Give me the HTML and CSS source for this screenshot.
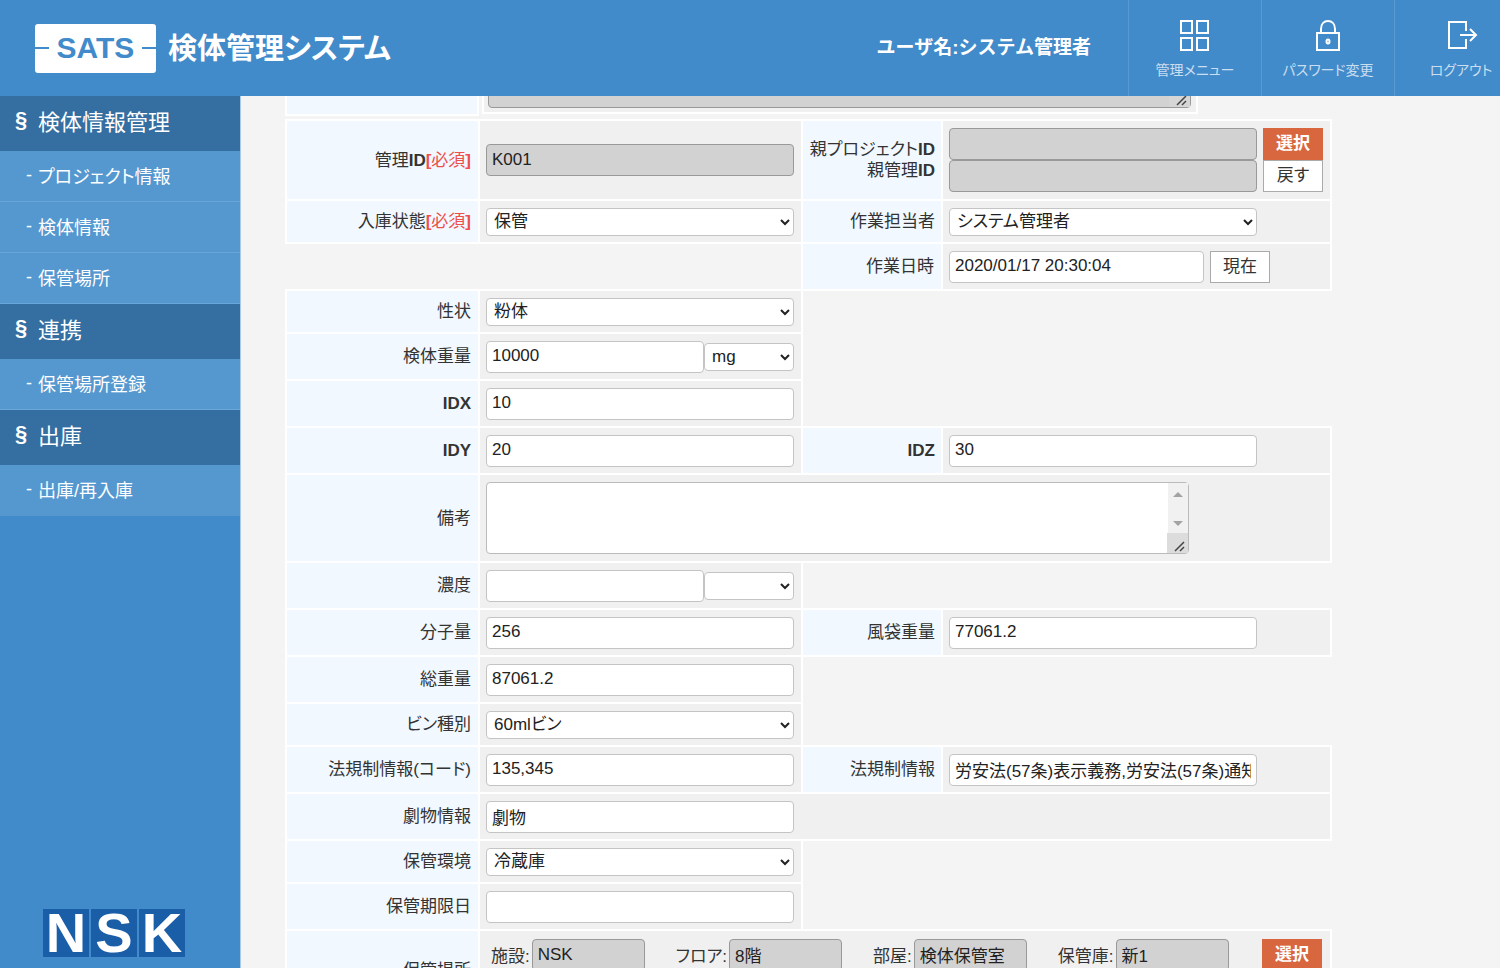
FILE: index.html
```html
<!DOCTYPE html>
<html lang="ja">
<head>
<meta charset="utf-8">
<title>検体管理システム</title>
<link rel="stylesheet" href="styles.css">
</head>
<body>
<header class="topbar">
  <div class="brand">
    <span class="brand-badge">SATS</span>
    <h1 class="brand-title">検体管理システム</h1>
  </div>
  <p class="user-name">ユーザ名:システム管理者</p>
  <nav class="top-nav">
    <a class="top-link" href="#">
      <svg class="top-icon" viewBox="0 0 36 36" fill="none" stroke="#fff" stroke-width="2"><path d="M4 4h11v12H4zM20 4h11v12H20zM4 21h11v12H4zM20 21h11v12H20z"/></svg>
      <span>管理メニュー</span>
    </a>
    <a class="top-link" href="#">
      <svg class="top-icon" viewBox="0 0 36 36" fill="none" stroke="#fff" stroke-width="2"><path d="M7 16h22v17H7zM11 16v-4c0-5 3-8 7-8s7 3 7 8v4"/><ellipse cx="18" cy="24.500" rx="1.500" ry="2"/></svg>
      <span>パスワード変更</span>
    </a>
    <a class="top-link" href="#">
      <svg class="top-icon" viewBox="0 0 36 36" fill="none" stroke="#fff" stroke-width="2"><path d="M23 14V5H6v26h17v-9M17 18h16M27 12l6 6-6 6"/></svg>
      <span>ログアウト</span>
    </a>
  </nav>
</header>
<div class="layout">
  <aside class="sidebar">
    <nav>
      <h2 class="menu-head"><span class="menu-mark">§</span>検体情報管理</h2>
      <a class="menu-item" href="#"><span class="menu-mark">-</span>プロジェクト情報</a>
      <a class="menu-item" href="#"><span class="menu-mark">-</span>検体情報</a>
      <a class="menu-item" href="#"><span class="menu-mark">-</span>保管場所</a>
      <h2 class="menu-head"><span class="menu-mark">§</span>連携</h2>
      <a class="menu-item" href="#"><span class="menu-mark">-</span>保管場所登録</a>
      <h2 class="menu-head"><span class="menu-mark">§</span>出庫</h2>
      <a class="menu-item" href="#"><span class="menu-mark">-</span>出庫/再入庫</a>
    </nav>
    <div class="nsk"><span>N</span><span>S</span><span>K</span></div>
  </aside>
  <main class="content">
    <form class="scrolled">
      <div class="upper">
        <div class="upper-label"></div>
        <div class="upper-body">
          <div class="area-wrap area-wrap-off">
            <textarea class="area" aria-label="プロジェクト備考" disabled></textarea>
            <svg class="grip" viewBox="0 0 14 14" stroke="#444" stroke-width="1.500"><path d="M2 12L11 3M7 12l4-4"/></svg>
          </div>
        </div>
      </div>
      <table class="form-table">
        <colgroup><col class="col-label"><col class="col-field"><col class="col-label2"><col class="col-field2"></colgroup>
        <tr class="row-tall">
          <th><label for="kid">管理<b>ID</b><em><b>[</b>必須<b>]</b></em></label></th>
          <td><input class="field" id="kid" value="K001" disabled></td>
          <th><label for="pid">親プロジェクト<b>ID</b></label><br><label for="pkid">親管理<b>ID</b></label></th>
          <td>
            <div class="pair">
              <input class="field" id="pid" disabled><button class="btn btn-main" type="button">選択</button>
              <input class="field" id="pkid" disabled><button class="btn" type="button">戻す</button>
            </div>
          </td>
        </tr>
        <tr class="row-select">
          <th><label for="state">入庫状態<em><b>[</b>必須<b>]</b></em></label></th>
          <td><select class="field" id="state"><option>保管</option></select></td>
          <th><label for="staff">作業担当者</label></th>
          <td><select class="field" id="staff"><option>システム管理者</option></select></td>
        </tr>
        <tr class="row-input">
          <td class="blank" colspan="2"></td>
          <th><label for="when">作業日時</label></th>
          <td><div class="line"><input class="field field-date" id="when" value="2020/01/17 20:30:04"><button class="btn" type="button">現在</button></div></td>
        </tr>
        <tr class="row-select">
          <th><label for="form">性状</label></th>
          <td><select class="field" id="form"><option>粉体</option></select></td>
          <td class="blank" colspan="2"></td>
        </tr>
        <tr class="row-input">
          <th><label for="weight">検体重量</label></th>
          <td><div class="unit"><input class="field" id="weight" value="10000"><select class="field" aria-label="重量単位"><option>mg</option></select></div></td>
          <td class="blank" colspan="2"></td>
        </tr>
        <tr class="row-input">
          <th><label for="idx"><b>IDX</b></label></th>
          <td><input class="field" id="idx" value="10"></td>
          <td class="blank" colspan="2"></td>
        </tr>
        <tr class="row-input">
          <th><label for="idy"><b>IDY</b></label></th>
          <td><input class="field" id="idy" value="20"></td>
          <th><label for="idz"><b>IDZ</b></label></th>
          <td><input class="field" id="idz" value="30"></td>
        </tr>
        <tr class="row-area">
          <th><label for="note">備考</label></th>
          <td colspan="3">
            <div class="area-wrap">
              <textarea class="area" id="note"></textarea>
              <div class="bar"><i class="bar-up"></i><i class="bar-down"></i></div>
              <svg class="grip" viewBox="0 0 14 14" stroke="#444" stroke-width="1.500"><path d="M2 12L11 3M7 12l4-4"/></svg>
            </div>
          </td>
        </tr>
        <tr class="row-input">
          <th><label for="conc">濃度</label></th>
          <td><div class="unit"><input class="field" id="conc"><select class="field" aria-label="濃度単位"><option></option></select></div></td>
          <td class="blank" colspan="2"></td>
        </tr>
        <tr class="row-input">
          <th><label for="mol">分子量</label></th>
          <td><input class="field" id="mol" value="256"></td>
          <th><label for="tare">風袋重量</label></th>
          <td><input class="field" id="tare" value="77061.2"></td>
        </tr>
        <tr class="row-input">
          <th><label for="gross">総重量</label></th>
          <td><input class="field" id="gross" value="87061.2"></td>
          <td class="blank" colspan="2"></td>
        </tr>
        <tr class="row-select">
          <th><label for="bottle">ビン種別</label></th>
          <td><select class="field" id="bottle"><option>60mlビン</option></select></td>
          <td class="blank" colspan="2"></td>
        </tr>
        <tr class="row-input">
          <th><label for="lawcode">法規制情報(コード)</label></th>
          <td><input class="field" id="lawcode" value="135,345"></td>
          <th><label for="law">法規制情報</label></th>
          <td><input class="field" id="law" value="労安法(57条)表示義務,労安法(57条)通知義務"></td>
        </tr>
        <tr class="row-input">
          <th><label for="drug">劇物情報</label></th>
          <td colspan="3"><input class="field" id="drug" value="劇物"></td>
        </tr>
        <tr class="row-select">
          <th><label for="env">保管環境</label></th>
          <td><select class="field" id="env"><option>冷蔵庫</option></select></td>
          <td class="blank" colspan="2"></td>
        </tr>
        <tr class="row-input">
          <th><label for="limit">保管期限日</label></th>
          <td><input class="field" id="limit"></td>
          <td class="blank" colspan="2"></td>
        </tr>
        <tr class="row-tall">
          <th>保管場所</th>
          <td class="place-cell" colspan="3">
            <div class="places">
              <div class="place"><label for="site">施設:</label><input class="field" id="site" value="NSK" disabled></div>
              <div class="place"><label for="floor">フロア:</label><input class="field" id="floor" value="8階" disabled></div>
              <div class="place"><label for="room">部屋:</label><input class="field" id="room" value="検体保管室" disabled></div>
              <div class="place"><label for="store">保管庫:</label><input class="field" id="store" value="新1" disabled></div>
              <button class="btn btn-main" type="button">選択</button>
            </div>
          </td>
        </tr>
      </table>
    </form>
  </main>
</div>
</body>
</html>
```
FILE: styles.css
```css
* { box-sizing: border-box; }

body {
  margin: 0;
  height: 100vh;
  display: flex;
  flex-direction: column;
  overflow: hidden;
  background: #f4f4f4;
  color: #333;
  font-family: "Liberation Sans", "Noto Sans CJK JP", sans-serif;
  font-size: 17px;
  font-feature-settings: "palt";
}

h1, h2, p { margin: 0; }
a { color: inherit; text-decoration: none; }

/* Header */
.topbar {
  flex: none;
  display: flex;
  align-items: center;
  height: 96px;
  padding-left: 35px;
  margin-right: -27px;
  background: #428bca;
  color: #fff;
}
.brand { display: flex; align-items: center; gap: 12px; flex: 1; }
.brand-badge {
  display: flex;
  align-items: center;
  justify-content: space-between;
  width: 121px;
  height: 49px;
  border-radius: 3px;
  background: #fff;
  color: #428bca;
  font-size: 30px;
  font-weight: bold;
}
.brand-badge::before, .brand-badge::after {
  content: "";
  width: 14px;
  height: 2px;
  background: #428bca;
}
.brand-title { padding-top: 2px; font-size: 29px; line-height: 40px; }
.user-name {
  margin-right: 37px;
  padding-bottom: 5px;
  font-size: 19px;
  font-weight: bold;
  font-feature-settings: normal;
}
.top-nav { display: flex; align-self: stretch; }
.top-link {
  display: flex;
  flex-direction: column;
  align-items: center;
  gap: 6px;
  width: 133px;
  padding-top: 17px;
  border-left: 1px solid #5a9ad2;
  color: #c9def0;
  font-size: 14px;
}
.top-icon { width: 36px; height: 36px; }

/* Sidebar */
.layout { flex: 1; display: flex; min-height: 0; }
.sidebar {
  flex: none;
  display: flex;
  flex-direction: column;
  justify-content: space-between;
  width: 241px;
  padding-bottom: 11px;
  border-right: 1px solid #a9c9e5;
  background: #428bca;
  color: #fff;
}
.menu-head {
  display: flex;
  align-items: center;
  height: 55px;
  padding: 0 0 7px 15px;
  background: #356fa2;
  font-size: 22px;
  font-weight: normal;
}
.menu-head .menu-mark { width: 23px; font-weight: bold; }
.menu-item {
  display: flex;
  align-items: center;
  height: 51px;
  padding: 0 0 2px 26px;
  border-bottom: 1px solid #6ba6d8;
  background: #5598d0;
  font-size: 18px;
}
.menu-item:last-child { border-bottom-color: #5598d0; }
.menu-item .menu-mark { width: 12px; }
.nsk { display: flex; gap: 2px; padding-left: 43px; }
.nsk span {
  width: 46px;
  height: 48px;
  background: #1a5ea8;
  font-size: 56px;
  font-weight: bold;
  line-height: 48px;
  text-align: center;
}

/* Form */
.content { flex: 1; min-width: 0; overflow: hidden; padding: 0 44px; }
.scrolled { margin-top: -62px; }
.upper { display: flex; align-items: flex-start; gap: 3px; margin-bottom: 3px; }
.upper-label {
  width: 194px;
  height: 82px;
  border: 2px solid #fff;
  background: #f1f8ff;
}
.upper-body {
  height: 80px;
  padding: 0 5px 7px 4px;
  border: 2px solid #fff;
  background: #f0f0f0;
}

.form-table {
  width: 100%;
  max-width: 1047px;
  border-collapse: collapse;
  table-layout: fixed;
}
.col-label { width: 193px; }
.col-field { width: 323px; }
.col-label2 { width: 140px; }
th, td { border: 2px solid #fff; }
th {
  padding: 0 7px 0 0;
  background: #f1f8ff;
  font-weight: normal;
  line-height: 21px;
  text-align: right;
}
th + td + th { padding-right: 6px; }
td { padding: 0 6px; background: #f0f0f0; }
.blank { border: 0; background: none; }
th em { color: #ee4f4b; font-style: normal; }
.row-tall { height: 80px; }
.row-select { height: 43px; }
.row-input { height: 47px; }
.row-area { height: 88px; }

.field {
  display: block;
  width: 308px;
  max-width: 100%;
  height: 32px;
  padding: 0 5px 1px;
  border: 1px solid #c4c4c4;
  border-radius: 4px;
  background: #fff;
  color: #222;
  font: inherit;
  font-feature-settings: inherit;
}
select.field { height: 28px; padding: 0 3px; }
.field:disabled, .area:disabled { border-color: #999; background: #d2d2d2; color: #222; }
.line, .unit { display: flex; align-items: center; }
.line { gap: 6px; }
.field-date { width: 255px; }
.unit input { width: 218px; }
.unit select { width: 90px; }
.pair { display: grid; grid-template-columns: 308px 60px; column-gap: 6px; }

.btn {
  width: 60px;
  height: 32px;
  padding: 0 0 5px;
  border: 1px solid #aaa;
  background: #fff;
  color: #333;
  font: inherit;
}
.btn-main { border-color: #d86740; background: #d86740; color: #fff; font-weight: bold; }

.area-wrap { position: relative; width: 703px; height: 72px; }
.area {
  display: block;
  width: 100%;
  height: 100%;
  border: 1px solid #bbb;
  border-radius: 4px;
  background: #fff;
  font: inherit;
  resize: none;
}
.grip {
  position: absolute;
  right: 1px;
  bottom: 1px;
  width: 21px;
  height: 20px;
  padding: 6px 1px 0 6px;
  background: #dcdcdc;
}
.area-wrap-off .grip { background: #d6d6d6; }
.bar {
  position: absolute;
  top: 1px;
  right: 1px;
  display: flex;
  flex-direction: column;
  justify-content: space-between;
  align-items: center;
  width: 20px;
  height: 50px;
  padding: 9px 0 7px;
  background: #f1f1f1;
}
.bar-up, .bar-down { border: 5px solid transparent; }
.bar-up { border-top: 0; border-bottom-color: #a3a3a3; }
.bar-down { border-bottom: 0; border-top-color: #a3a3a3; }

.place-cell { vertical-align: top; padding-top: 8px; }
.places { display: flex; gap: 26px; padding-right: 2px; }
.places .btn { margin-left: auto; }
.place { display: flex; align-items: center; gap: 2px; padding-left: 5px; }
.place label { padding-bottom: 2px; }
.place .field { width: 113px; }
```
